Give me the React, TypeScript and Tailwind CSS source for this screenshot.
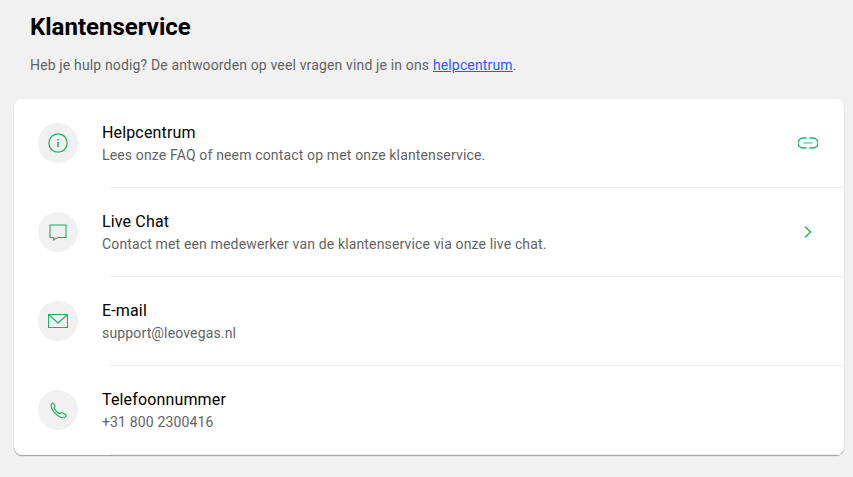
import React from 'react';

const GREEN = '#21b062';

const InfoIcon = () => (
  <svg width="20" height="20" viewBox="0 0 20 20" fill="none" stroke={GREEN} strokeWidth="1.2">
    <circle cx="10" cy="10" r="9.2" />
    <path d="M10 9v5" strokeWidth="1.6" />
    <path d="M10 6v1.6" strokeWidth="1.6" />
  </svg>
);

const ChatIcon = () => (
  <svg width="18" height="17" viewBox="0 0 18 17" fill="none" stroke={GREEN} strokeWidth="1.1">
    <path d="M1 1h16v12.500H8.500L4.500 16V13.500H1z" />
  </svg>
);

const MailIcon = () => (
  <svg width="20" height="14" viewBox="0 0 20 14" fill="none" stroke={GREEN} strokeWidth="1.1">
    <path d="M.5.5h19v13H.5z" />
    <path d="M.5.5 10 9l9.500-8.500" />
  </svg>
);

const PhoneIcon = () => (
  <svg width="17" height="17" viewBox="0 0 17 17" fill="none" stroke={GREEN} strokeWidth="1.1" strokeLinejoin="round">
    <path d="M1.200 2.400 3 .8l2.200 3.400-1.300 1.700C5 8.300 7.300 10.600 10 11.900l1.500-1.600 4.500 2.400.2 1.200-1.700 1.700c-1.500.4-3.200.1-4.400-.6C6.500 13 3 9.500 1.500 5.800c-.4-1-.5-2.400-.3-3.400z" />
  </svg>
);

const LinkIcon = () => (
  <svg width="20" height="12" viewBox="0 0 20 12" fill="none" stroke={GREEN} strokeWidth="1.3" strokeLinecap="round">
    <path d="M8 1H5a5 5 0 0 0 0 10h3" />
    <path d="M12 1h3a5 5 0 0 1 0 10h-3" />
    <path d="M6 6h8" strokeOpacity="0.6" strokeWidth="1.6" />
  </svg>
);

const ChevronIcon = () => (
  <svg width="8" height="12" viewBox="0 0 8 12" fill="none" stroke={GREEN} strokeWidth="1.4">
    <path d="M1 .8 6.500 6 1 11.200" />
  </svg>
);

const ROWS = [
  { title: 'Helpcentrum', text: 'Lees onze FAQ of neem contact op met onze klantenservice.', icon: <InfoIcon />, action: <LinkIcon /> },
  { title: 'Live Chat', text: 'Contact met een medewerker van de klantenservice via onze live chat.', icon: <ChatIcon />, action: <ChevronIcon /> },
  { title: 'E-mail', text: 'support@leovegas.nl', icon: <MailIcon /> },
  { title: 'Telefoonnummer', text: '+31 800 2300416', icon: <PhoneIcon /> },
];

const App: React.FC = () => (
  <div className="h-[477px] overflow-hidden bg-[#f1f1f1] font-['Roboto',sans-serif]">
    <div className="px-[30px] pt-[13px]">
      <h1 className="text-[24px] leading-[28px] font-bold text-black">Klantenservice</h1>
      <p className="mt-[14px] text-[14px] leading-[20px] tracking-[0.15px] text-[#636363]">
        Heb je hulp nodig? De antwoorden op veel vragen vind je in ons{' '}
        <a className="text-[#2f5cf0] underline">helpcentrum</a>.
      </p>
    </div>
    <div className="mx-[14px] mt-[24px] w-[830px] rounded-[8px] bg-white shadow-[0_1px_1px_rgba(0,0,0,0.35)]">
      {ROWS.map((row) => (
        <div key={row.title}>
          <div className="flex h-[88px] items-center pl-[24px]">
            <div className="flex h-[40px] w-[40px] items-center justify-center rounded-full bg-[#f1f1f1]">
              {row.icon}
            </div>
            <div className="ml-[24px] h-full flex-1 pt-[23px]">
              <div className="text-[16px] leading-[22px] tracking-[0.15px] text-black">{row.title}</div>
              <div className="mt-[1px] text-[14px] leading-[20px] tracking-[0.15px] text-[#636363]">{row.text}</div>
            </div>
            {row.action && (
              <div className="flex w-[72px] items-center justify-center">{row.action}</div>
            )}
          </div>
          <div className="ml-[96px] h-px bg-[#eeeeee]" />
        </div>
      ))}
    </div>
  </div>
);

export default App;
